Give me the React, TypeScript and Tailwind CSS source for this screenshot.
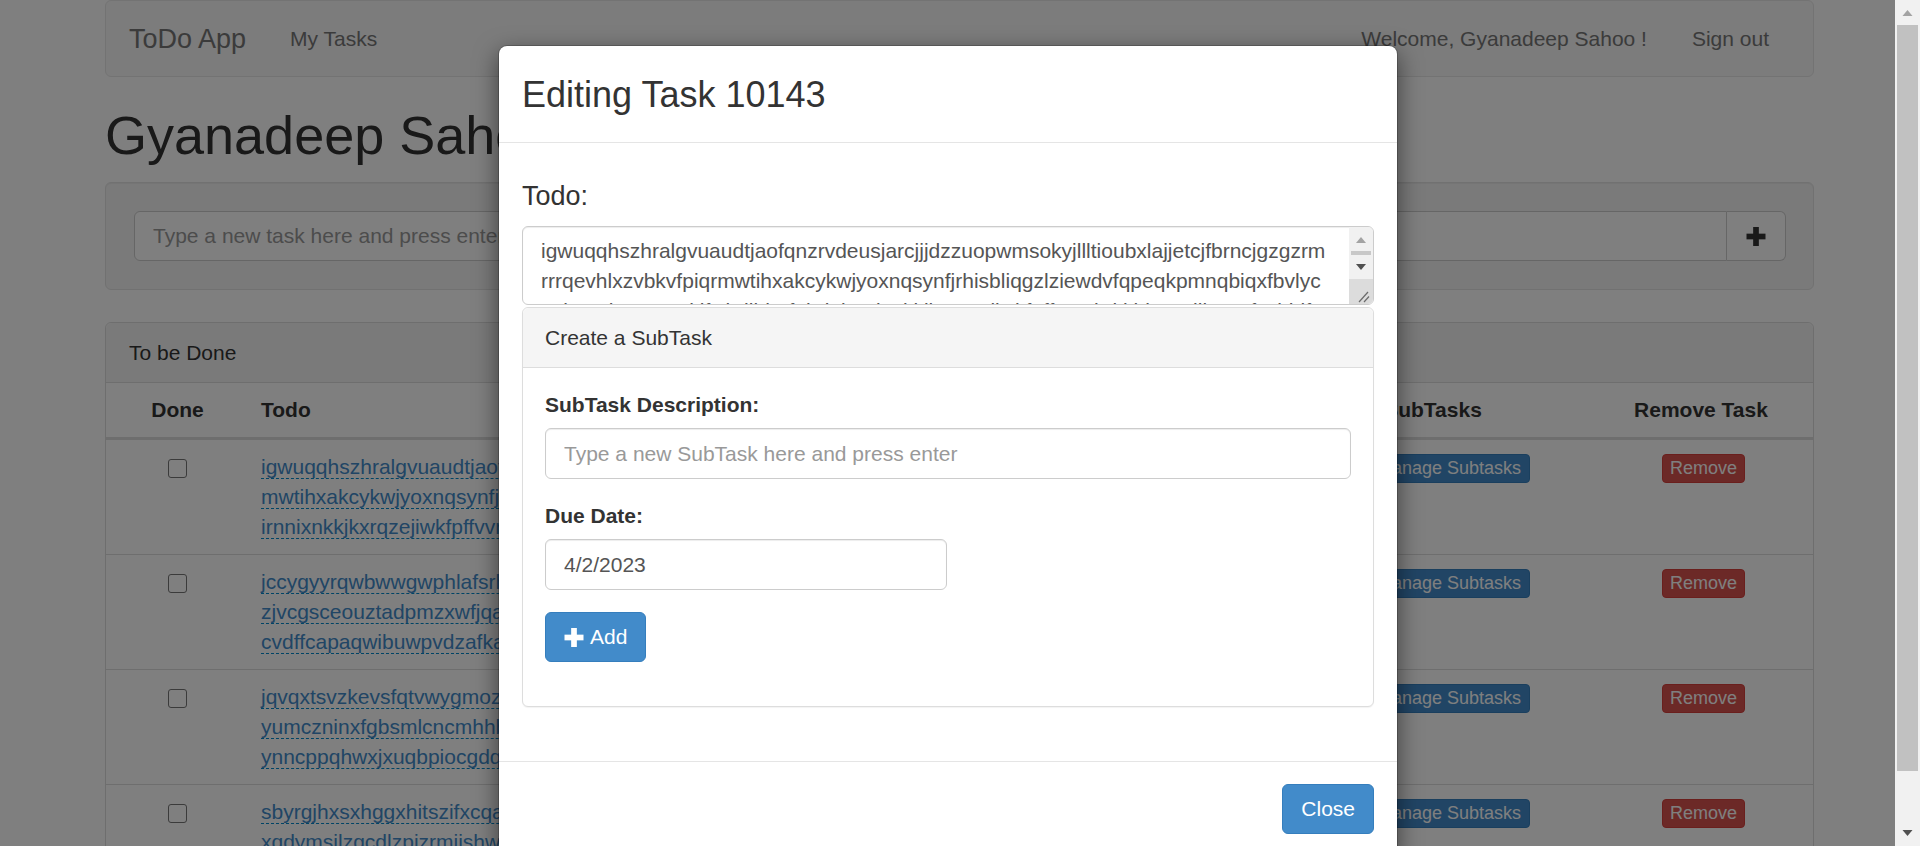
import React from "react";

const tasks: string[][] = [
  [
    "igwuqqhszhralgvuaudtjaofqnzrvdeusjarcjjjdzzuopwmsokyjllltioubxlajjetcjfbrncjgzgzrmrrrqevhlxzvbkvfpiqr",
    "mwtihxakcykwjyoxnqsynfjrhisbliqgzlziewdvfqpeqkpmnqbiqxfbvlycxqkeuqhnrxtgqzklfwbdlbhqfpbdq",
    "irnnixnkkjkxrqzejiwkfpffvvrqbdtkhbqmdlkwsefzxbh",
  ],
  [
    "jccygyyrqwbwwgwphlafsrhkudmvtoxqzbnlyreiwcgpfhaoxkqzdmtrnsvblwyjqhcugpefoaxnmrtzkdbvlsqwie",
    "zjvcgsceouztadpmzxwfjqaklhrbnyvtgiosdpwqmxcefuhzjkrnbltaoyvgdsqpwimcxkehzufrjnatbglvdo",
    "cvdffcapaqwibuwpvdzafkahtrmnexgyjlsoqvkzdbcwiuprhtfmnqag",
  ],
  [
    "jqvqxtsvzkevsfqtvwygmozhradlcpkbnuxiejftwsgqmyvzolkhdacbrpnuxgiejtwsfqmvyzkolhdarcb",
    "yumczninxfgbsmlcncmhhbqatwrkpdoveyjzsilxugfhtqnbmcoawdkrpvyezjsxliguhfqtbnmcoaw",
    "ynncppqhwxjxuqbpiocgdqrlsavetkzmfhnyodgwuibxqjcplraekstvmzo",
  ],
  [
    "sbyrgjhxsxhggxhitszifxcqapmvolknuderwbtyjqzfchgaismxovplkduenrbwytjqzcfhgaimsxovp",
    "xqdymsilzgcdlzpizrmiishwnbaqfkteovjruhxgcpmdlyszinwbqaftkeovjruhxgcpmdlyszinwb",
    "kfhtqpwnrxazlvemdbgcyuoijskfhtqpwnrxazlvemdb",
  ],
];

function PlusGlyph({ className }: { className?: string }) {
  return (
    <svg viewBox="0 0 20 20" className={className} fill="currentColor">
      <rect x="0" y="7" width="20" height="6" />
      <rect x="7" y="0" width="6" height="20" />
    </svg>
  );
}

function Arrow({ up, className }: { up?: boolean; className?: string }) {
  return (
    <svg viewBox="0 0 10 6" className={className} fill="currentColor">
      {up ? <polygon points="5,0 10,6 0,6" /> : <polygon points="0,0 10,0 5,6" />}
    </svg>
  );
}

function TaskRow({ lines, first }: { lines: string[]; first?: boolean }) {
  return (
    <div
      className={
        "grid grid-cols-[143px_1fr_294px_224px] " +
        (first ? "" : "border-t border-[#ddd]")
      }
    >
      <div className="flex justify-center pt-[19px]">
        <span className="block h-[19px] w-[19px] rounded-[3px] border-[1.5px] border-[#767676] bg-white" />
      </div>
      <div className="overflow-hidden px-[12px] py-[12px] leading-[30px]">
        {lines.map((l, i) => (
          <div key={i} className="whitespace-nowrap">
            <span className="border-b-[1.5px] border-dashed border-[#0088cc] text-[#428bca]">
              {l}
            </span>
          </div>
        ))}
      </div>
      <div className="flex justify-center pl-[14px] pt-[14px]">
        <button className="h-[29px] rounded-[4px] border border-[#357ebd] bg-[#428bca] px-[8px] text-[18px] leading-[27px] text-white">
          Manage Subtasks
        </button>
      </div>
      <div className="flex justify-center pl-[5px] pt-[14px]">
        <button className="h-[29px] rounded-[4px] border border-[#d43f3a] bg-[#d9534f] px-[7px] text-[18px] leading-[27px] text-white">
          Remove
        </button>
      </div>
    </div>
  );
}

export default function App() {
  return (
    <div className="relative h-[846px] w-[1920px] overflow-hidden bg-white font-['Liberation_Sans',Arial,Helvetica,sans-serif] text-[21px] leading-[30px] text-[#333]">
      {/* page behind the modal */}
      <div className="ml-[105px] w-[1709px]">
        <nav className="flex h-[77px] items-center rounded-[6px] border border-[#e7e7e7] bg-[#f8f8f8] text-[#777]">
          <span className="ml-[23px] w-[161px] text-[27px]">ToDo App</span>
          <span>My Tasks</span>
          <span className="ml-auto">Welcome, Gyanadeep Sahoo !</span>
          <span className="ml-[45px] mr-[44px]">Sign out</span>
        </nav>

        <h1 className="mt-[29px] text-[54px] leading-[59px]">Gyanadeep Sahoo</h1>

        <div className="mt-[17px] rounded-[6px] border border-[#e3e3e3] bg-[#f5f5f5] py-[28px] pl-[28px] pr-[27px] shadow-[inset_0_1px_1px_rgba(0,0,0,0.05)]">
          <div className="flex h-[50px]">
            <input
              readOnly
              placeholder="Type a new task here and press enter"
              className="h-full flex-1 rounded-l-[6px] border border-[#ccc] bg-white px-[18px] text-[#555] placeholder:text-[#999] outline-none"
            />
            <button className="flex w-[59px] items-center justify-center rounded-r-[6px] border border-l-0 border-[#ccc] bg-white text-[#333]">
              <PlusGlyph className="h-[19px] w-[20px]" />
            </button>
          </div>
        </div>

        <div className="mt-[32px] rounded-[6px] border border-[#ddd] bg-white">
          <div className="flex h-[60px] items-center rounded-t-[6px] border-b border-[#ddd] bg-[#f5f5f5] px-[23px]">
            To be Done
          </div>
          <div className="grid h-[57px] grid-cols-[143px_1fr_294px_224px] items-center border-b-[3px] border-[#ddd] font-bold">
            <div className="text-center">Done</div>
            <div className="px-[12px]">Todo</div>
            <div className="pr-[18px] text-center">SubTasks</div>
            <div className="text-center">Remove Task</div>
          </div>
          {tasks.map((t, i) => (
            <TaskRow key={i} lines={t} first={i === 0} />
          ))}
        </div>
      </div>

      {/* backdrop */}
      <div className="absolute inset-0 bg-black/50" />

      {/* modal */}
      <div className="absolute left-[498px] top-[45px] w-[900px] rounded-[9px] border border-black/20 bg-white bg-clip-padding shadow-[0_8px_23px_rgba(0,0,0,0.5)]">
        <div className="border-b border-[#e5e5e5] px-[23px] pb-[22px] pt-[23px]">
          <h3 className="text-[36px] leading-[51px]">Editing Task 10143</h3>
        </div>

        <div className="px-[23px] pb-[24px] pt-[23px]">
          <h4 className="mt-[15px] text-[27px] leading-[30px]">Todo:</h4>

          <div className="relative mt-[15px] h-[79px] overflow-hidden rounded-[6px] border border-[#ccc] shadow-[inset_0_1px_1px_rgba(0,0,0,0.075)]">
            <div className="pl-[18px] pr-[40px] pt-[9px] leading-[30px] text-[#555]">
              <div className="overflow-hidden whitespace-nowrap">
                igwuqqhszhralgvuaudtjaofqnzrvdeusjarcjjjdzzuopwmsokyjllltioubxlajjetcjfbrncjgzgzrm
              </div>
              <div className="overflow-hidden whitespace-nowrap">
                rrrqevhlxzvbkvfpiqrmwtihxakcykwjyoxnqsynfjrhisbliqgzlziewdvfqpeqkpmnqbiqxfbvlyc
              </div>
              <div className="overflow-hidden whitespace-nowrap">
                xqkeuqhnrxtgqzklfwbdlbhqfpbdqirnnixnkkjkxrqzejiwkfpffvvrqbdtkhbqmdlkwsefzxbhlf
              </div>
            </div>
            <div className="absolute bottom-0 right-0 top-0 w-[24px] bg-[#f1f1f1]">
              <Arrow up className="absolute left-[7px] top-[10px] h-[6px] w-[10px] text-[#a3a3a3]" />
              <div className="absolute left-[2px] right-[2px] top-[24px] h-[4px] bg-[#c8c8c8]" />
              <Arrow className="absolute left-[7px] top-[37px] h-[6px] w-[10px] text-[#505050]" />
              <div className="absolute bottom-0 left-0 right-0 h-[25px] bg-[#dcdcdc]">
                <svg viewBox="0 0 24 25" className="h-full w-full" stroke="#6b6b6b" strokeWidth="1.2">
                  <line x1="10" y1="23" x2="19" y2="13" />
                  <line x1="15" y1="23" x2="20" y2="17.5" />
                </svg>
              </div>
            </div>
          </div>

          <div className="mb-[30px] mt-[2px] rounded-[6px] border border-[#ddd] bg-white shadow-[0_1px_1px_rgba(0,0,0,0.05)]">
            <div className="flex h-[60px] items-center rounded-t-[6px] border-b border-[#ddd] bg-[#f5f5f5] px-[22px]">
              Create a SubTask
            </div>
            <div className="px-[22px] pb-[22px] pt-[22px]">
              <div className="mb-[22px]">
                <label className="mb-[8px] block font-bold">SubTask Description:</label>
                <input
                  readOnly
                  placeholder="Type a new SubTask here and press enter"
                  className="h-[51px] w-full rounded-[6px] border border-[#ccc] bg-white px-[18px] text-[#555] shadow-[inset_0_1px_1px_rgba(0,0,0,0.075)] outline-none placeholder:text-[#999]"
                />
              </div>
              <div className="mb-[22px]">
                <label className="mb-[8px] block font-bold">Due Date:</label>
                <input
                  readOnly
                  value="4/2/2023"
                  className="h-[51px] w-[402px] rounded-[6px] border border-[#ccc] bg-white px-[18px] text-[#555] shadow-[inset_0_1px_1px_rgba(0,0,0,0.075)] outline-none"
                />
              </div>
              <div className="mb-[22px]">
                <button className="flex h-[50px] items-center gap-[6px] rounded-[6px] border border-[#357ebd] bg-[#428bca] px-[18px] text-white">
                  <PlusGlyph className="h-[19px] w-[20px]" />
                  <span>Add</span>
                </button>
              </div>
            </div>
          </div>
        </div>

        <div className="flex justify-end border-t border-[#e5e5e5] px-[23px] pb-[23px] pt-[22px]">
          <button className="h-[50px] rounded-[6px] border border-[#357ebd] bg-[#428bca] px-[18px] text-white">
            Close
          </button>
        </div>
      </div>

      {/* page scrollbar */}
      <div className="absolute right-0 top-0 h-full w-[25px] bg-[#f1f1f1]">
        <Arrow up className="absolute left-[7px] top-[10px] h-[6px] w-[11px] text-[#a3a3a3]" />
        <div className="absolute left-[2px] right-[2px] top-[25px] h-[746px] bg-[#c1c1c1]" />
        <Arrow className="absolute left-[7px] top-[830px] h-[6px] w-[11px] text-[#505050]" />
      </div>
    </div>
  );
}
